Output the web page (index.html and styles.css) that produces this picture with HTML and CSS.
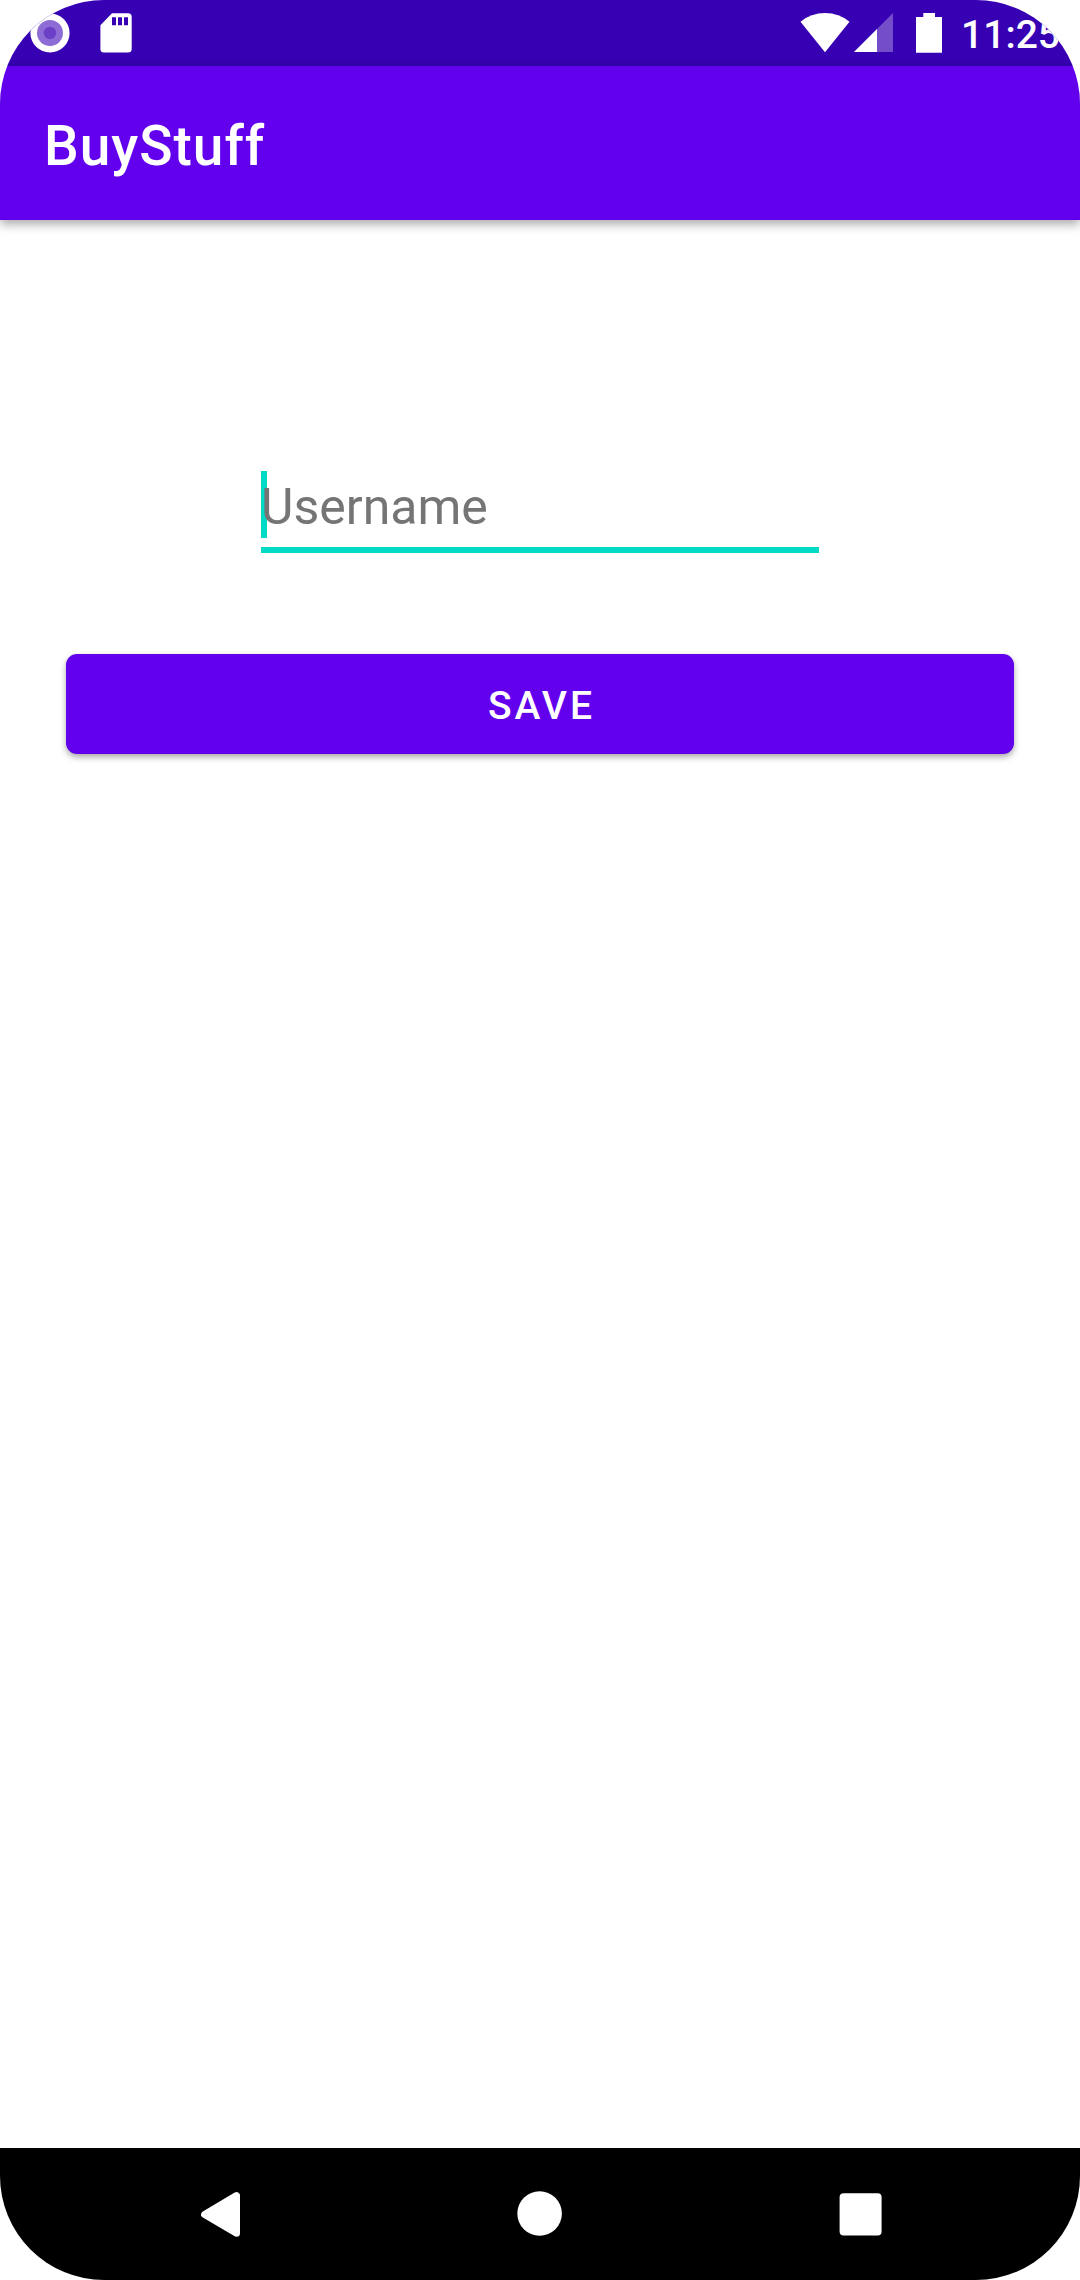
FILE: index.html
```html
<!DOCTYPE html>
<html lang="en">
<head>
<meta charset="utf-8">
<meta name="viewport" content="width=device-width, initial-scale=1">
<title>BuyStuff</title>
<link rel="stylesheet" href="styles.css">
</head>
<body>
<div class="screen">
  <div class="status-bar">
    <div class="status-group status-notifications">
      <svg width="40" height="40" viewBox="0 0 40 40" aria-hidden="true">
        <circle cx="20" cy="20" r="19.6" fill="#fff"/>
        <circle cx="20" cy="20" r="13" fill="#8e6cd5"/>
        <circle cx="20" cy="20" r="6.2" fill="#6b40c6"/>
      </svg>
      <svg width="32" height="40" viewBox="0 0 32 40" aria-hidden="true">
        <path fill="#fff" fill-rule="evenodd" d="M12 .3H28Q31.700.3 31.700 4V36Q31.700 39.500 28 39.500H4Q.4 39.500.4 36V12.300ZM12 4.200V12.300H16V4.200ZM18 4.200V12.300H22V4.200ZM24 4.200V12.300H28V4.200Z"/>
      </svg>
    </div>
    <div class="status-group status-system">
      <svg width="50" height="40" viewBox="0 0 50 40" aria-hidden="true">
        <path fill="#fff" d="M.5 8.700Q11 0 25 0T49.500 8.700L25 39.300Z"/>
      </svg>
      <svg width="40" height="40" viewBox="0 0 40 40" aria-hidden="true">
        <path fill="#fff" fill-opacity=".3" d="M39 0V39H0Z"/>
        <path fill="#fff" d="M23 16V39H0Z"/>
      </svg>
      <svg class="battery" width="26" height="40" viewBox="0 0 26 40" aria-hidden="true">
        <path fill="#fff" d="M7.300 0H19V4H26V39.700H0V4H7.300Z"/>
      </svg>
      <time class="clock">11:25</time>
    </div>
  </div>
  <header class="app-bar">
    <h1 class="app-title">BuyStuff</h1>
  </header>
  <main class="content">
    <form class="form">
      <div class="field">
        <input class="field-input" type="text" name="username" placeholder="Username" aria-label="Username">
      </div>
      <button class="save-button" type="button">SAVE</button>
    </form>
  </main>
  <nav class="nav-bar">
    <button class="nav-button" type="button" aria-label="Back">
      <svg width="60" height="60" viewBox="0 0 60 60" aria-hidden="true">
        <path fill="#fff" stroke="#fff" stroke-width="7" stroke-linejoin="round" d="M46.500 11.600V49.200L14.600 30.600Z"/>
      </svg>
    </button>
    <button class="nav-button" type="button" aria-label="Home">
      <svg width="60" height="60" viewBox="0 0 60 60" aria-hidden="true">
        <circle cx="29.600" cy="29.500" r="22.300" fill="#fff"/>
      </svg>
    </button>
    <button class="nav-button" type="button" aria-label="Recent apps">
      <svg width="60" height="60" viewBox="0 0 60 60" aria-hidden="true">
        <rect x="9.600" y="9.300" width="42" height="42.300" rx="4" fill="#fff"/>
      </svg>
    </button>
  </nav>
</div>
</body>
</html>
```
FILE: styles.css
```css
:root {
  --primary: #6200ee;
  --primary-dark: #3700b3;
  --accent: #03dac5;
}

* {
  box-sizing: border-box;
}

body {
  margin: 0;
  background: #fff;
  font-family: Roboto, sans-serif;
}

svg {
  display: block;
  flex: none;
}

.screen {
  display: flex;
  flex-direction: column;
  min-height: 100vh;
  overflow: hidden;
  border-radius: 104px;
  background: #fff;
}

.status-bar {
  display: flex;
  justify-content: space-between;
  align-items: center;
  height: 66px;
  padding: 0 20px 0 30px;
  background: var(--primary-dark);
}

.status-group {
  display: flex;
  align-items: center;
}

.status-notifications {
  gap: 30px;
}

.status-system {
  gap: 4px;
}

.battery {
  margin: 0 15px 0 18px;
}

.clock {
  padding-top: 3px;
  color: #fff;
  font-size: 39px;
  font-weight: 500;
  line-height: 48px;
}

.app-bar {
  display: flex;
  align-items: center;
  height: 154px;
  padding: 6px 44px 0;
  background: var(--primary);
  box-shadow: 0 4px 10px rgba(0, 0, 0, 0.35);
}

.app-title {
  margin: 0;
  color: #fff;
  font-size: 55px;
  font-weight: 500;
  line-height: 72px;
  letter-spacing: 1px;
}

.content {
  flex: 1;
  padding: 244px 66px 66px;
}

.form {
  display: flex;
  flex-direction: column;
  align-items: center;
  gap: 101px;
}

.field {
  position: relative;
  width: 558px;
  max-width: 100%;
  padding: 7px 0 9px;
  border-bottom: 6px solid var(--accent);
}

/* Text cursor of the focused field, drawn beneath the hint */
.field::before {
  content: "";
  position: absolute;
  left: 0;
  top: 7px;
  width: 6px;
  height: 67px;
  background: var(--accent);
}

.field-input {
  position: relative;
  display: block;
  width: 100%;
  height: 67px;
  padding: 4px 0 0;
  border: 0;
  outline: 0;
  background: transparent;
  color: #212121;
  caret-color: transparent;
  font: 400 50px/60px Roboto, sans-serif;
}

.field-input::placeholder {
  color: #757575;
  opacity: 1;
}

.save-button {
  width: 100%;
  height: 100px;
  padding: 4px 0 0 3px;
  border: 0;
  border-radius: 11px;
  background: var(--primary);
  box-shadow: 0 3px 6px rgba(0, 0, 0, 0.35);
  color: #fff;
  font: 500 39px/48px Roboto, sans-serif;
  letter-spacing: 3px;
}

.nav-bar {
  display: flex;
  height: 132px;
  padding: 0 60px;
  background: #000;
}

.nav-button {
  display: flex;
  flex: 1;
  align-items: center;
  justify-content: center;
  padding: 0;
  border: 0;
  background: transparent;
}
```
